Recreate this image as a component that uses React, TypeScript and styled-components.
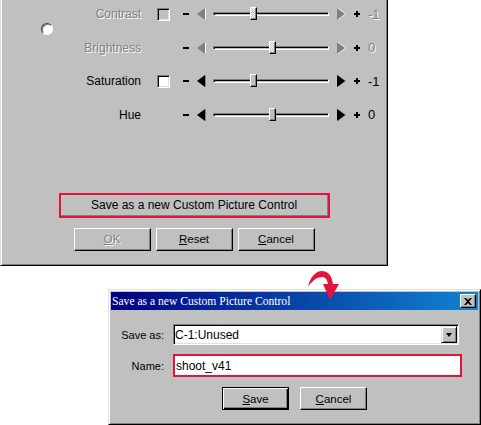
import { FC } from 'react';
import styled, { createGlobalStyle, css } from 'styled-components';

const GlobalStyle = createGlobalStyle`
  html, body {
    margin: 0;
    padding: 0;
    background: #fff;
  }
  body {
    font-family: "Liberation Sans", Arial, sans-serif;
  }
`;

const RED = '#e4133c';

const disabledText = css`
  color: #808080;
  text-shadow: 1px 1px 0 #fff;
`;

const Canvas = styled.div`
  position: relative;
  width: 481px;
  height: 425px;
  overflow: hidden;
  background: #fff;
`;

/* ---------- upper window (picture control panel) ---------- */

const Panel = styled.div`
  box-sizing: border-box;
  width: 388px;
  height: 266px;
  background: #c0c0c0;
  border-left: 1px solid #dfdfdf;
  border-right: 1px solid #000;
  border-bottom: 1px solid #000;
  box-shadow: inset 1px 0 #fff, inset -1px -1px #808080;
  display: flex;
  flex-direction: column;
`;

const Upper = styled.div`
  display: flex;
  padding-left: 40px;
`;

const Radio = styled.span`
  box-sizing: border-box;
  width: 12px;
  height: 12px;
  margin-top: 23px;
  border-radius: 50%;
  background: #fff;
  border: 1px solid;
  border-color: #404040 #fff #fff #404040;
  box-shadow: inset 1px 1px #808080;
`;

const Rows = styled.div`
  display: flex;
  flex-direction: column;
  gap: 13.67px;
  padding-top: 4px;
`;

const Row = styled.div`
  display: flex;
  align-items: center;
  height: 20px;
`;

const Label = styled.span<{ $disabled?: boolean }>`
  width: 88px;
  text-align: right;
  font-size: 12px;
  color: #000;
  ${({ $disabled }) => $disabled && disabledText}
`;

const CheckSlot = styled.span`
  width: 13px;
  height: 13px;
  margin-left: 16px;
`;

const CheckBox = styled.span<{ $disabled?: boolean }>`
  display: block;
  box-sizing: border-box;
  width: 13px;
  height: 13px;
  background: ${({ $disabled }) => ($disabled ? '#c0c0c0' : '#fff')};
  border: 1px solid;
  border-color: #808080 #fff #fff #808080;
  box-shadow: inset 1px 1px #000, inset -1px -1px #dfdfdf;
`;

const Minus = styled.span`
  width: 6px;
  height: 2px;
  margin-left: 13px;
  background: #000;
`;

const Plus = styled.span`
  position: relative;
  width: 6px;
  height: 6px;
  margin-left: 9px;

  &::before,
  &::after {
    content: '';
    position: absolute;
    background: #000;
  }
  &::before {
    left: 0;
    top: 2px;
    width: 6px;
    height: 2px;
  }
  &::after {
    left: 2px;
    top: 0;
    width: 2px;
    height: 6px;
  }
`;

const Arrow = styled.span<{ $dir: 'left' | 'right'; $disabled?: boolean }>`
  width: 0;
  height: 0;
  margin-left: 8px;
  border-top: 6px solid transparent;
  border-bottom: 6px solid transparent;
  ${({ $dir, $disabled }) =>
    $dir === 'left'
      ? `border-right: 8px solid ${$disabled ? '#808080' : '#000'};`
      : `border-left: 8px solid ${$disabled ? '#808080' : '#000'};`}
  filter: drop-shadow(1px 0 0 ${({ $disabled }) => ($disabled ? '#fff' : '#808080')});
`;

const Track = styled.span`
  position: relative;
  box-sizing: border-box;
  width: 116px;
  height: 4px;
  margin-left: 8px;
  border: 1px solid;
  border-color: #808080 #fff #fff #808080;
  box-shadow: inset 1px 1px #000;
`;

const Thumb = styled.span<{ $disabled?: boolean }>`
  position: absolute;
  top: -6px;
  box-sizing: border-box;
  width: 7px;
  height: 13px;
  background: ${({ $disabled }) =>
    $disabled ? 'conic-gradient(#fff 25%, #c0c0c0 0 50%, #fff 0 75%, #c0c0c0 0) 0 0 / 2px 2px' : '#c0c0c0'};
  border: 1px solid;
  border-color: #fff #000 #000 #fff;
  box-shadow: inset -1px -1px #808080;
`;

const Value = styled.span<{ $disabled?: boolean }>`
  margin-left: 8px;
  font-size: 13px;
  color: #000;
  ${({ $disabled }) => $disabled && disabledText}
`;

const WinButton = styled.button<{ $width: number; $default?: boolean }>`
  box-sizing: border-box;
  width: ${({ $width }) => $width}px;
  height: 23px;
  padding: 0;
  background: #c0c0c0;
  font: 11.5px "Liberation Sans", Arial, sans-serif;
  color: #000;
  border: 1px solid;
  border-color: #fff #000 #000 #fff;
  box-shadow: inset -1px -1px #808080;

  ${({ $default }) =>
    $default &&
    css`
      border-color: #000;
      box-shadow: inset 1px 1px #fff, inset -1px -1px #000, inset -2px -2px #808080;
    `}

  &:disabled {
    ${disabledText}
  }
`;

const SaveAsButton = styled.button`
  box-sizing: border-box;
  align-self: center;
  width: 271px;
  height: 25px;
  margin-top: 68px;
  padding: 0;
  background: #c0c0c0;
  border: 2px solid ${RED};
  box-shadow: inset -1px -1px #808080;
  font: 12px "Liberation Sans", Arial, sans-serif;
  color: #000;
`;

const ButtonRow = styled.div<{ $gap: number; $top: number }>`
  display: flex;
  justify-content: center;
  gap: ${({ $gap }) => $gap}px;
  margin-top: ${({ $top }) => $top}px;
`;

/* ---------- dialog ---------- */

const Dialog = styled.div`
  box-sizing: border-box;
  width: 373px;
  height: 136px;
  margin: 23px 0 0 108px;
  padding: 2px;
  background: #c0c0c0;
  border: 1px solid;
  border-color: #dfdfdf #000 #000 #dfdfdf;
  box-shadow: inset 1px 1px #fff, inset -1px -1px #808080;
  display: flex;
  flex-direction: column;
`;

const TitleBar = styled.div`
  height: 18px;
  display: flex;
  align-items: center;
  justify-content: space-between;
  padding: 0 2px 0 1px;
  background: linear-gradient(90deg, #000080, #1084d0);
`;

const Title = styled.span`
  font: 11.6px "Liberation Serif", "Times New Roman", serif;
  color: #fff;
  white-space: nowrap;
`;

const CloseButton = styled.span`
  box-sizing: border-box;
  width: 16px;
  height: 14px;
  display: flex;
  align-items: center;
  justify-content: center;
  background: #c0c0c0;
  border: 1px solid;
  border-color: #fff #000 #000 #fff;
  box-shadow: inset -1px -1px #808080;
`;

const Form = styled.div`
  display: grid;
  grid-template-columns: 53px 286px;
  grid-template-rows: 21px 23px;
  column-gap: 9px;
  row-gap: 9px;
  align-items: center;
  margin-top: 14px;
`;

const FieldLabel = styled.span`
  text-align: right;
  font-size: 11px;
  color: #000;
`;

const Combo = styled.div`
  box-sizing: border-box;
  height: 21px;
  display: flex;
  align-items: center;
  background: #fff;
  border: 1px solid;
  border-color: #808080 #fff #fff #808080;
  box-shadow: inset 1px 1px #000, inset -1px -1px #dfdfdf;
  font-size: 12px;
  color: #000;

  & > span:first-child {
    padding-left: 1px;
  }
`;

const DropButton = styled.span`
  box-sizing: border-box;
  width: 16px;
  height: 17px;
  margin-left: auto;
  margin-right: 1px;
  display: flex;
  align-items: center;
  justify-content: center;
  background: #c0c0c0;
  border: 1px solid;
  border-color: #dfdfdf #000 #000 #dfdfdf;
  box-shadow: inset 1px 1px #fff, inset -1px -1px #808080;

  &::after {
    content: '';
    border-left: 3.5px solid transparent;
    border-right: 3.5px solid transparent;
    border-top: 4px solid #000;
  }
`;

const NameInput = styled.div`
  box-sizing: border-box;
  width: 289px;
  height: 23px;
  display: flex;
  align-items: center;
  padding-left: 1px;
  background: #fff;
  border: 2px solid ${RED};
  font-size: 12px;
  color: #000;
`;

const CurvedArrow = styled.svg`
  position: absolute;
  left: 306px;
  top: 269px;
`;

const adjustments = [
  { label: 'Contrast', value: -1, check: true, disabled: true },
  { label: 'Brightness', value: 0, check: false, disabled: true },
  { label: 'Saturation', value: -1, check: true, disabled: false },
  { label: 'Hue', value: 0, check: false, disabled: false },
];

const App: FC = () => {
  return (
    <Canvas>
      <GlobalStyle />
      <Panel>
        <Upper>
          <Radio />
          <Rows>
            {adjustments.map(({ label, value, check, disabled }) => (
              <Row key={label}>
                <Label $disabled={disabled}>{label}</Label>
                <CheckSlot>{check && <CheckBox $disabled={disabled} />}</CheckSlot>
                <Minus />
                <Arrow $dir="left" $disabled={disabled} />
                <Track>
                  <Thumb $disabled={disabled} style={{ left: 55 + value * 19 }} />
                </Track>
                <Arrow $dir="right" $disabled={disabled} />
                <Plus />
                <Value $disabled={disabled}>{value}</Value>
              </Row>
            ))}
          </Rows>
        </Upper>
        <SaveAsButton>Save as a new Custom Picture Control</SaveAsButton>
        <ButtonRow $gap={5} $top={10}>
          <WinButton $width={77} disabled>
            <u>O</u>K
          </WinButton>
          <WinButton $width={77}>
            <u>R</u>eset
          </WinButton>
          <WinButton $width={77}>
            <u>C</u>ancel
          </WinButton>
        </ButtonRow>
      </Panel>

      <Dialog>
        <TitleBar>
          <Title>Save as a new Custom Picture Control</Title>
          <CloseButton>
            <svg width="8" height="7" viewBox="0 0 8 7">
              <path d="M0 0h2l2 2 2-2h2L5 3.5 8 7H6L4 5 2 7H0l3-3.5z" fill="#000" />
            </svg>
          </CloseButton>
        </TitleBar>
        <Form>
          <FieldLabel>Save as:</FieldLabel>
          <Combo>
            <span>C-1:Unused</span>
            <DropButton />
          </Combo>
          <FieldLabel>Name:</FieldLabel>
          <NameInput>shoot_v41</NameInput>
        </Form>
        <ButtonRow $gap={11} $top={10}>
          <WinButton $width={67} $default>
            <u>S</u>ave
          </WinButton>
          <WinButton $width={67}>
            <u>C</u>ancel
          </WinButton>
        </ButtonRow>
      </Dialog>

      <CurvedArrow width="36" height="33" viewBox="0 0 36 33">
        <path
          d="M2 18C4 8 10 2 16 2C22 2 26 7 27 15L33 15L24 31L17 15L22 15C21 10 19 8 16 8C11 8 6 12 2 18Z"
          fill={RED}
        />
      </CurvedArrow>
    </Canvas>
  );
};

export default App;
